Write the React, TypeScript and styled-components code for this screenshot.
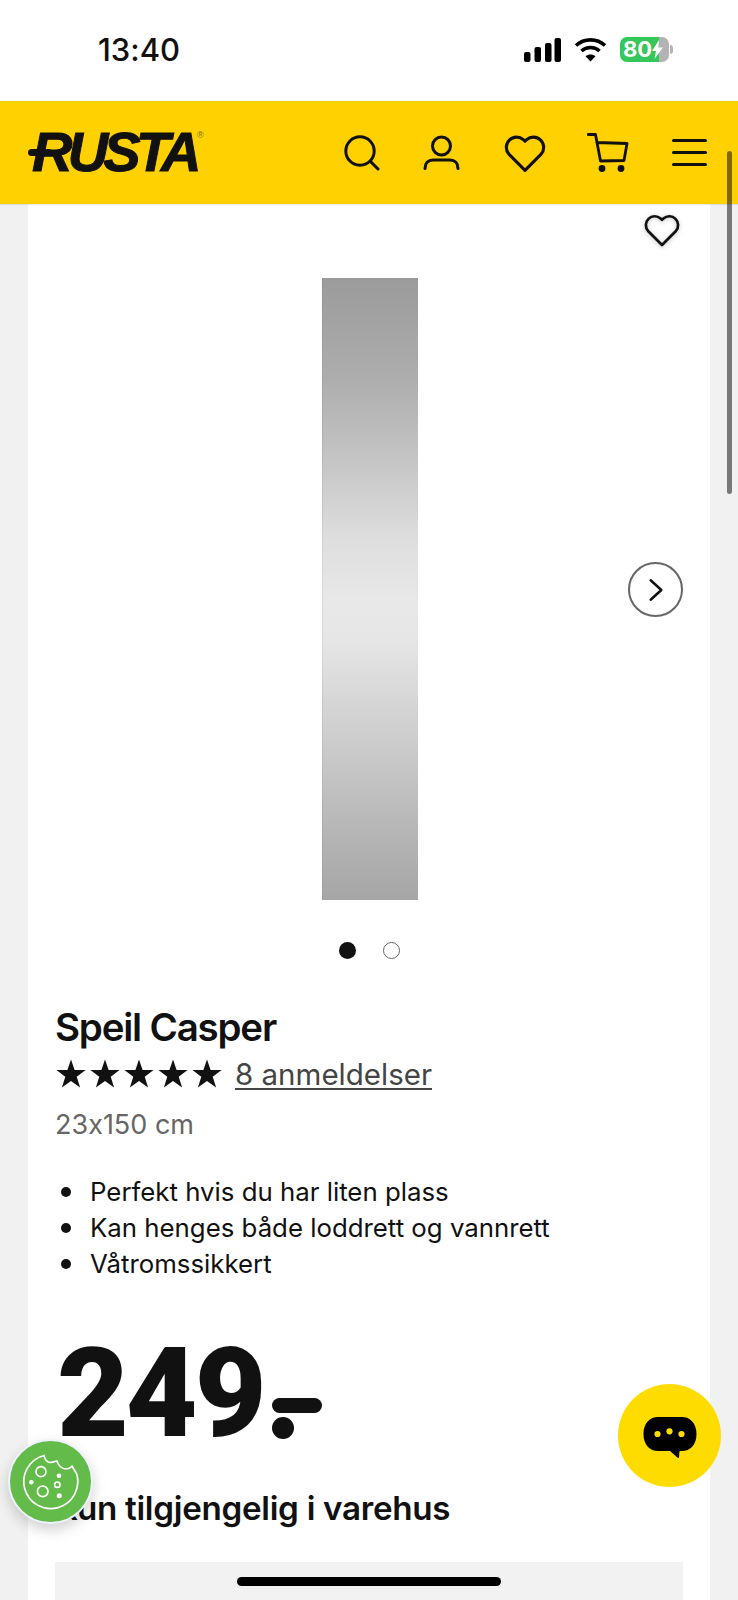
import React from 'react'
import styled, { createGlobalStyle } from 'styled-components'

const GlobalStyle = createGlobalStyle`
  html, body { margin: 0; padding: 0; background: #f1f1f1; }
  * { box-sizing: border-box; }
  body { font-family: Inter, "Liberation Sans", sans-serif; color: #111; font-feature-settings: "calt" 0; }
`

const bullets = [
  'Perfekt hvis du har liten plass',
  'Kan henges både loddrett og vannrett',
  'Våtromssikkert',
]

const HeartIcon = ({ size, stroke }: { size: number; stroke: number }) => (
  <svg width={size} height={size} viewBox="0 0 24 24" fill="none" stroke="#111" strokeWidth={stroke} strokeLinejoin="round">
    <path d="M12 21.5 3.2 12.6a5.6 5.6 0 0 1 7.9-7.9l.9.9.9-.9a5.6 5.6 0 0 1 7.9 7.9z" />
  </svg>
)

const Star = () => (
  <svg width="30" height="30" viewBox="0 0 30 30" fill="#111">
    <path d="M15 .5l3.6 10.6h11l-8.9 6.6 3.4 10.8L15 22l-9.100 6.500 3.400-10.800L.4 11.100h11z" />
  </svg>
)

const App = () => {
  return (
    <Page>
      <GlobalStyle />
      <StatusBar>
        <Time>13:40</Time>
        <StatusIcons>
          <svg width="37" height="24" viewBox="0 0 37 24" fill="#000">
            <rect x="0" y="14" width="6.500" height="10" rx="2" />
            <rect x="10.500" y="9" width="6.500" height="15" rx="2" />
            <rect x="21" y="5" width="6.500" height="19" rx="2" />
            <rect x="30.500" y="0" width="6.500" height="24" rx="2" />
          </svg>
          <svg width="33" height="25" viewBox="0 0 33 25" fill="none" stroke="#000" strokeWidth="3.600">
            <path d="M2 8.500C10 1 23 1 31 8.500" />
            <path d="M7.500 14c5-4.600 13-4.600 18 0" />
            <path d="M16.500 24.500 11.500 19.300c2.800-2.400 7.200-2.400 10 0z" fill="#000" stroke="none" />
          </svg>
          <BatteryWrap>
            <Battery>
              80
              <svg width="11" height="19" viewBox="0 0 11 19" fill="#fff">
                <path d="M7 0 0 11h4l-1.500 8L11 7.500H6.500z" />
              </svg>
            </Battery>
            <BatteryNub />
          </BatteryWrap>
        </StatusIcons>
      </StatusBar>

      <Header>
        <Logo>
          <LogoBar />
          RUSTA
          <LogoMark>®</LogoMark>
        </Logo>
        <HeaderIcons>
          <svg width="36" height="36" viewBox="0 0 36 36" fill="none" stroke="#111" strokeWidth="3" strokeLinecap="round">
            <circle cx="16" cy="16" r="14.200" />
            <path d="M26.500 26.500 34 34" />
          </svg>
          <svg width="37" height="36" viewBox="0 0 37 36" fill="none" stroke="#111" strokeWidth="3" strokeLinecap="round">
            <circle cx="18.500" cy="11" r="9" />
            <path d="M2 33.500c0-5 3-8.500 8-8.500h17c5 0 8 3.500 8 8.500" />
          </svg>
          <HeartIcon size={44} stroke={1.700} />
          <svg width="42" height="40" viewBox="0 0 42 40" fill="none" stroke="#111" strokeWidth="2.800" strokeLinejoin="round" strokeLinecap="round">
            <path d="M1 1.500h7.500L13.500 28 37 27.500 40 10.500 9.800 9.500" />
            <circle cx="15" cy="35.500" r="3.400" fill="#111" stroke="none" />
            <circle cx="34" cy="35.500" r="3.400" fill="#111" stroke="none" />
          </svg>
          <Burger>
            <span />
            <span />
            <span />
          </Burger>
        </HeaderIcons>
      </Header>

      <Main>
        <Card>
          <Gallery>
            <SaveButton>
              <HeartIcon size={38} stroke={1.700} />
            </SaveButton>
            <Mirror />
            <NextButton>
              <svg width="16" height="24" viewBox="0 0 18 26" fill="none" stroke="#111" strokeWidth="2.800" strokeLinecap="round" strokeLinejoin="round">
                <path d="M3 2l12 11L3 24" />
              </svg>
            </NextButton>
          </Gallery>
          <Dots>
            <Dot $active />
            <Dot />
          </Dots>
          <Title>Speil Casper</Title>
          <RatingRow>
            <Stars>
              <Star />
              <Star />
              <Star />
              <Star />
              <Star />
            </Stars>
            <Reviews>8 anmeldelser</Reviews>
          </RatingRow>
          <SizeText>23x150 cm</SizeText>
          <BulletList>
            {bullets.map((b) => (
              <li key={b}>{b}</li>
            ))}
          </BulletList>
          <Price>
            249
            <PriceSuffix>
              <PriceDash />
              <PriceDot />
            </PriceSuffix>
          </Price>
          <Availability>Kun tilgjengelig i varehus</Availability>
          <StockPanel />
        </Card>
      </Main>

      <ScrollThumb />
      <CookieButton>
        <svg width="58" height="56" viewBox="0 0 58 56" fill="none" stroke="#fff" strokeWidth="1.700">
          <path d="M22 1.500c.5 3.500 3 7 6 7 2.500 0 5-1.500 7-1.500 1 4 4.500 8 9 8 2.500 0 4.500-1 6-2.700 1.500 2.500 3.500 5 4.700 7.700A27 27 0 1 1 22 1.500z" />
          <circle cx="19" cy="17.700" r="5" />
          <circle cx="20.700" cy="37.300" r="5.300" />
          <circle cx="35.300" cy="30.700" r="2.700" />
          <circle cx="37" cy="21.700" r="2.300" fill="#fff" stroke="none" />
          <circle cx="9.300" cy="28.300" r="2.300" fill="#fff" stroke="none" />
          <circle cx="37.300" cy="41.700" r="2.500" fill="#fff" stroke="none" />
        </svg>
      </CookieButton>
      <ChatButton>
        <svg width="54" height="42" viewBox="0 0 54 42">
          <path d="M15 0h24c8 0 14.500 6 14.500 17S47 34 39 34h-2.500l-.5 6.500-1 .5-8-7H15C7 34 .5 28 .5 17S7 0 15 0z" fill="#000" />
          <circle cx="14.500" cy="17" r="3.100" fill="#ffdc00" />
          <circle cx="26.500" cy="14.300" r="3.100" fill="#ffdc00" />
          <circle cx="38.500" cy="17" r="3.100" fill="#ffdc00" />
        </svg>
      </ChatButton>
      <HomeIndicator />
    </Page>
  )
}

export default App

const Page = styled.div`
  position: relative;
  width: 738px;
  height: 1600px;
  overflow: hidden;
  background: #f1f1f1;
`

const StatusBar = styled.div`
  height: 101px;
  background: #fff;
  display: flex;
  align-items: flex-start;
  justify-content: space-between;
  padding: 30px 65px 0 98px;
`

const Time = styled.div`
  font-size: 31px;
  font-weight: 550;
  line-height: 40px;
  color: #111;
`

const StatusIcons = styled.div`
  display: flex;
  align-items: center;
  gap: 13px;
  margin-top: 7px;
`

const BatteryWrap = styled.div`
  display: flex;
  align-items: center;
  gap: 1px;
`

const Battery = styled.div`
  width: 49px;
  height: 25px;
  border-radius: 7px;
  background: linear-gradient(90deg, #34c759 0 80%, #b3b3b3 80% 100%);
  color: #fff;
  font-family: Inter, sans-serif;
  font-weight: 700;
  font-size: 22px;
  line-height: 25px;
  display: flex;
  align-items: center;
  padding-left: 3px;
`

const BatteryNub = styled.div`
  width: 3px;
  height: 9px;
  border-radius: 0 3px 3px 0;
  background: #b3b3b3;
`

const Header = styled.header`
  height: 103px;
  background: #ffd100;
  box-shadow: 0 1px 1px rgba(0, 0, 0, 0.08);
  display: flex;
  align-items: center;
  justify-content: space-between;
  padding: 0 31px 0 28px;
  position: relative;
`

const Logo = styled.div`
  position: relative;
  font-family: "Liberation Sans", Arial, sans-serif;
  font-style: italic;
  font-weight: 700;
  font-size: 56px;
  line-height: 58px;
  letter-spacing: -4.800px;
  color: #111;
  -webkit-text-stroke: 1px #111;
  padding-left: 6px;
  margin-top: -2px;
  margin-left: -2px;
`

const LogoBar = styled.span`
  position: absolute;
  left: 2px;
  top: 26px;
  width: 24px;
  height: 7px;
  border-radius: 4px;
  background: #111;
`

const LogoMark = styled.span`
  position: absolute;
  right: -7px;
  top: 7px;
  font-size: 9px;
  line-height: 10px;
  font-style: normal;
  font-weight: 400;
  letter-spacing: 0;
  -webkit-text-stroke: 0;
  color: #7a6a10;
`

const HeaderIcons = styled.div`
  display: flex;
  align-items: center;
  gap: 45px;

  svg:nth-child(1) {
    margin-right: -2px;
  }

  svg:nth-child(3) {
    margin: 0 -5px 0 -2px;
  }
`

const Burger = styled.div`
  width: 35px;
  margin-left: -2px;
  display: flex;
  flex-direction: column;
  gap: 9px;

  span {
    display: block;
    height: 3px;
    border-radius: 2px;
    background: #111;
  }
`

const Main = styled.main`
  padding: 0 28px;
`

const Card = styled.div`
  background: #fff;
  padding: 0 27px;
  display: flex;
  flex-direction: column;
`

const Gallery = styled.div`
  position: relative;
  display: flex;
  justify-content: center;
  padding: 74px 0 0 2px;
`

const Mirror = styled.div`
  width: 96px;
  height: 622px;
  background: linear-gradient(180deg, #9b9b9b 0%, #adadad 16%, #c6c6c6 30%, #dedede 42%, #e8e8e8 52%, #e6e6e6 58%, #d6d6d6 68%, #c4c4c4 80%, #b4b4b4 90%, #a6a6a6 100%);
  box-shadow: inset 1px 0 0 rgba(0, 0, 0, 0.06);
`

const SaveButton = styled.div`
  position: absolute;
  top: 7px;
  right: 2px;
  filter: drop-shadow(0 1px 2px rgba(0, 0, 0, 0.25));
`

const NextButton = styled.div`
  position: absolute;
  top: 358px;
  right: 0;
  width: 55px;
  height: 55px;
  border-radius: 50%;
  border: 2px solid #666;
  background: #fff;
  display: flex;
  align-items: center;
  justify-content: center;
`

const Dots = styled.div`
  display: flex;
  justify-content: center;
  gap: 27px;
  margin-top: 42px;
`

const Dot = styled.span<{ $active?: boolean }>`
  width: 17px;
  height: 17px;
  border-radius: 50%;
  background: ${(p) => (p.$active ? '#111' : '#fff')};
  border: ${(p) => (p.$active ? 'none' : '1.500px solid #666')};
`

const Title = styled.h1`
  margin: 45px 0 0;
  font-size: 38.500px;
  line-height: 46px;
  font-weight: 600;
  letter-spacing: -1.200px;
  color: #111;
`

const RatingRow = styled.div`
  display: flex;
  align-items: center;
  gap: 13px;
  margin-top: 6px;
`

const Stars = styled.div`
  display: flex;
  gap: 4px;
  margin-left: 1px;
`

const Reviews = styled.a`
  font-size: 29.500px;
  line-height: 36px;
  color: #444;
  text-decoration: underline;
  text-underline-offset: 3px;
  text-decoration-thickness: 1.500px;
`

const SizeText = styled.div`
  margin-top: 15px;
  font-size: 27px;
  line-height: 36px;
  color: #666;
`

const BulletList = styled.ul`
  margin: 31px 0 0;
  padding: 0;
  list-style: none;
  font-size: 25.800px;
  line-height: 36px;
  color: #111;

  li {
    display: flex;
    align-items: center;
    gap: 19px;
    padding-left: 6px;
  }

  li::before {
    content: '';
    width: 10px;
    height: 10px;
    border-radius: 50%;
    background: #111;
  }
`

const Price = styled.div`
  display: flex;
  align-items: flex-end;
  margin-top: 57px;
  font-family: Roboto, Inter, sans-serif;
  font-size: 124px;
  line-height: 110px;
  font-weight: 900;
  letter-spacing: -3px;
  color: #111;
  padding-left: 2px;
`

const PriceSuffix = styled.div`
  display: flex;
  flex-direction: column;
  align-items: flex-start;
  gap: 4px;
  margin: 0 0 10px 8px;
`

const PriceDash = styled.span`
  width: 50px;
  height: 15px;
  border-radius: 8px;
  background: #111;
`

const PriceDot = styled.span`
  width: 22px;
  height: 22px;
  border-radius: 50%;
  background: #111;
`

const Availability = styled.h2`
  margin: 39px 0 0;
  font-size: 33.200px;
  line-height: 40px;
  font-weight: 600;
  letter-spacing: -0.300px;
  color: #111;
`

const StockPanel = styled.div`
  margin-top: 34px;
  height: 120px;
  background: #f2f2f2;
`

const ScrollThumb = styled.div`
  position: absolute;
  left: 727px;
  top: 151px;
  width: 5px;
  height: 343px;
  border-radius: 3px;
  background: rgba(0, 0, 0, 0.5);
`

const CookieButton = styled.div`
  position: absolute;
  left: 8px;
  top: 1439px;
  width: 85px;
  height: 85px;
  border-radius: 50%;
  background: #63bb4a;
  border: 2px solid #eef2fb;
  box-shadow: 0 6px 14px rgba(0, 0, 0, 0.18);
  display: flex;
  align-items: center;
  justify-content: center;
`

const ChatButton = styled.div`
  position: absolute;
  left: 618px;
  top: 1384px;
  width: 103px;
  height: 103px;
  border-radius: 50%;
  background: #ffdc00;
  display: flex;
  align-items: center;
  justify-content: center;
  padding-top: 5px;
`

const HomeIndicator = styled.div`
  position: absolute;
  left: 237px;
  top: 1577px;
  width: 264px;
  height: 9px;
  border-radius: 5px;
  background: #000;
`
